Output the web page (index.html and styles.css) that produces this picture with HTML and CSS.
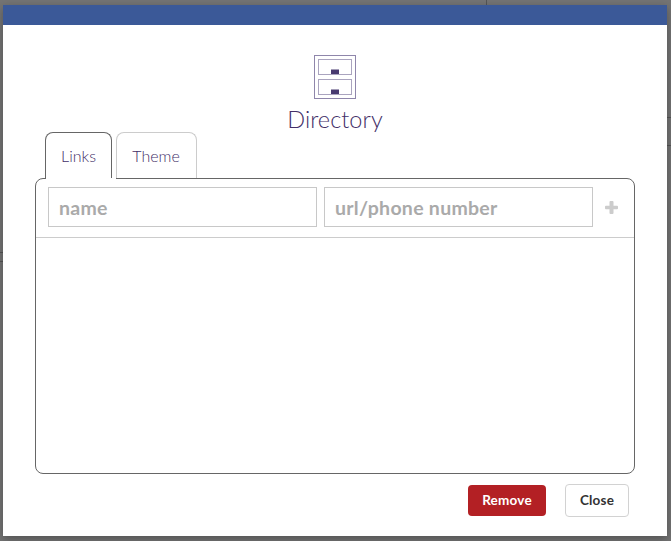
FILE: index.html
```html
<!DOCTYPE html>
<html lang="en">
<head>
<meta charset="utf-8">
<title>Directory</title>
<link rel="stylesheet" href="styles.css">
</head>
<body>
<i class="page-line line-top"></i><i class="page-line line-left"></i><i class="page-line line-left second"></i><i class="page-line line-right"></i><i class="page-line line-right second"></i>
<main class="modal">
  <div class="bar"></div>
  <header class="heading">
    <svg class="cabinet" width="42" height="44" viewBox="0 0 42 44" fill="none" stroke="#8f86ab">
      <rect x=".5" y=".5" width="41" height="43"/>
      <rect x="4.5" y="4.5" width="33" height="15" stroke="#aaa4bf"/>
      <rect x="4.5" y="24.5" width="33" height="15" stroke="#aaa4bf"/>
      <path d="M17 14.500h8V19h-8zM17 34.500h8V39h-8z" fill="#483a70" stroke="none"/>
    </svg>
    <h1>Directory</h1>
  </header>
  <nav class="tabs">
    <a class="tab active">Links</a>
    <a class="tab">Theme</a>
  </nav>
  <section class="panel">
    <div class="entry">
      <input class="field" placeholder="name">
      <input class="field" placeholder="url/phone number">
      <svg class="plus" width="13" height="13" viewBox="0 0 13 13"><path d="M5.500 0h2q1 0 1 1v3.700H12q1 0 1 1v1.600q0 1-1 1H8.500V12q0 1-1 1h-2q-1 0-1-1V8.300H1q-1 0-1-1V5.700q0-1 1-1h3.500V1q0-1 1-1z" fill="#ccc"/></svg>
    </div>
  </section>
  <footer class="actions">
    <button class="button remove">Remove</button>
    <button class="button close">Close</button>
  </footer>
</main>
</body>
</html>
```
FILE: styles.css
```css
* { box-sizing: border-box; }
body {
  margin: 0;
  height: 541px;
  padding: 5px 4px 5px 3px;
  overflow: hidden;
  position: relative;
  background: #747474;
  font-family: Lato, "Open Sans", sans-serif;
}
.page-line { position: absolute; background: #555; }
.line-top { left: 486px; top: 0; width: 1px; height: 5px; }
.line-left { left: 0; top: 252px; width: 3px; height: 1px; }
.line-left.second { top: 261px; }
.line-right { right: 0; top: 117px; width: 4px; height: 1px; }
.line-right.second { top: 145px; }
.modal {
  position: relative;
  height: 531px;
  background: #fff;
  box-shadow: 0 3px 9px rgba(0, 0, 0, .3);
}
.bar { height: 20px; background: #3b5998; }
.heading {
  height: 107px;
  padding-top: 30px;
  display: flex;
  flex-direction: column;
  align-items: center;
}
.cabinet { display: block; flex: none; }
h1 {
  margin: 5px 0 0;
  color: #432f68;
  font-size: 23.5px;
  line-height: 30px;
  font-weight: 300;
  letter-spacing: .05px;
}
.tabs { display: flex; gap: 4px; padding-left: 42px; height: 46px; }
.tab {
  height: 46px;
  width: 81px;
  padding-right: 1px;
  display: flex;
  justify-content: center;
  border: 1px solid #ccc;
  border-bottom: 0;
  border-radius: 8px 8px 0 0;
  color: #432f68;
  font-size: 16px;
  font-weight: 300;
  line-height: 45px;
}
.tab.active { position: relative; width: 67px; padding-right: 0; border-color: #666; }
.tab.active::after {
  content: "";
  position: absolute;
  left: 0;
  top: 45px;
  width: 70px;
  height: 1px;
  background: #fff;
}
.panel {
  margin-left: 32px;
  width: 600px;
  height: 296px;
  border: 1px solid #666;
  border-radius: 8px;
}
.entry {
  height: 59px;
  padding: 8px 0 0 12px;
  display: flex;
  gap: 7px;
  border-bottom: 1px solid #ccc;
}
.field {
  width: 269px;
  height: 40px;
  padding: 0 10px;
  border: 1px solid #c8c8c8;
  border-radius: 0;
  background: #fff;
  font: 700 19.5px/38px Lato, sans-serif;
  letter-spacing: .28px;
}
.field::placeholder { color: #aaa; opacity: 1; }
.plus { margin: 14px 0 0 5px; }
.actions {
  display: flex;
  align-items: center;
  justify-content: flex-end;
  gap: 19px;
  padding: 10px 38px 0 0;
}
.button {
  padding: 0 0 1px;
  border-radius: 4px;
  font: 700 13.5px/20px Lato, sans-serif;
  letter-spacing: .2px;
}
.remove { width: 78px; height: 31px; border: 0; background: #b32024; color: #fff; }
.close { width: 64px; height: 33px; border: 1px solid #d2d2d2; background: #fff; color: #333; }
```
